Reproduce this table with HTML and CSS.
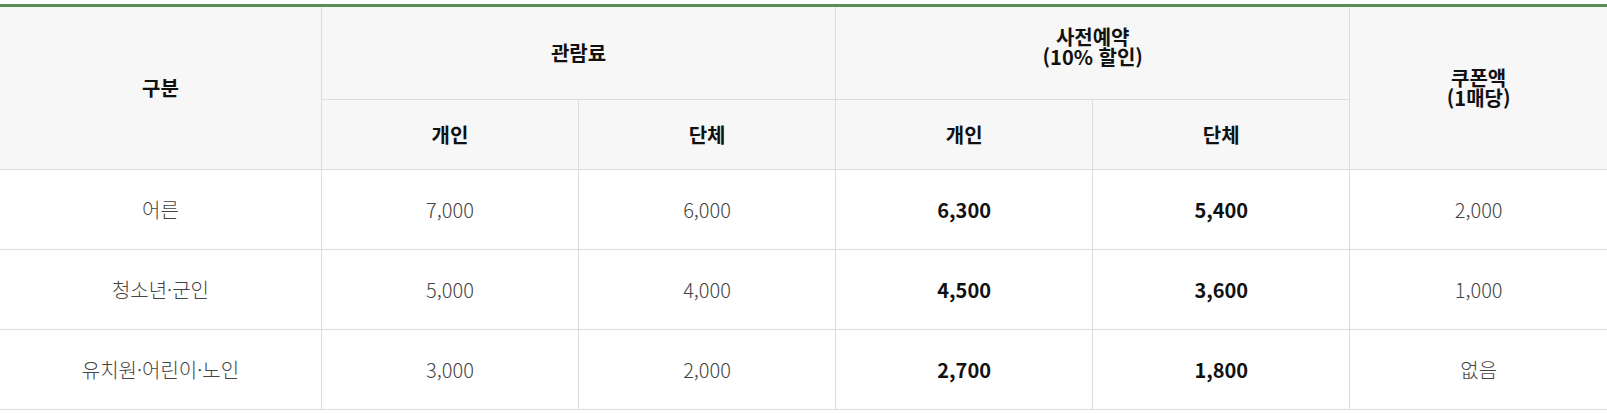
FILE: index.html
```html
<!DOCTYPE html>
<html lang="ko">
<head>
<meta charset="utf-8">
<title>관람료</title>
<link rel="stylesheet" href="styles.css">
</head>
<body>
<div class="wrap">
<table class="fee">
  <colgroup>
    <col class="c-first">
    <col class="c-rest"><col class="c-rest"><col class="c-rest"><col class="c-rest"><col class="c-rest">
  </colgroup>
  <thead>
    <tr class="h1">
      <th rowspan="2">구분</th>
      <th colspan="2">관람료</th>
      <th colspan="2" class="two up">사전예약<br>(10% 할인)</th>
      <th rowspan="2" class="two last">쿠폰액<br>(1매당)</th>
    </tr>
    <tr class="h2">
      <th>개인</th>
      <th>단체</th>
      <th>개인</th>
      <th>단체</th>
    </tr>
  </thead>
  <tbody>
    <tr>
      <td>어른</td><td>7,000</td><td>6,000</td><td class="b">6,300</td><td class="b">5,400</td><td class="last">2,000</td>
    </tr>
    <tr>
      <td>청소년·군인</td><td>5,000</td><td>4,000</td><td class="b">4,500</td><td class="b">3,600</td><td class="last">1,000</td>
    </tr>
    <tr>
      <td>유치원·어린이·노인</td><td>3,000</td><td>2,000</td><td class="b">2,700</td><td class="b">1,800</td><td class="last">없음</td>
    </tr>
  </tbody>
</table>
</div>
</body>
</html>
```
FILE: styles.css
```css
html, body {
  margin: 0;
  padding: 0;
  background: #fff;
}
.wrap {
  padding-top: 4px;
}
.fee {
  width: 100%;
  border-collapse: collapse;
  table-layout: fixed;
  border-top: 3px solid #588c58;
  font-family: "Noto Sans CJK KR", "Noto Sans", sans-serif;
  font-size: 20px;
  color: #444;
}
.c-first { width: 20%; }
.c-rest { width: 16%; }
.fee th {
  background: #f7f7f7;
  color: #111;
  font-weight: 700;
  line-height: 22px;
  border: 1px solid #dcdcdc;
  text-align: center;
  vertical-align: middle;
  padding: 0;
}
.fee th.two {
  line-height: 20px;
}
.fee td {
  border: 1px solid #dcdcdc;
  text-align: center;
  vertical-align: middle;
  font-weight: 300;
  height: 79px;
  padding: 0;
}
.fee tr > :first-child { border-left: none; }
.fee .last { border-right: none; }
.fee .h1 th { height: 92px; }
.fee .h1 th.up {
  height: 80px;
  padding-bottom: 12px;
}
.fee .h2 th { height: 69px; }
.fee td.b {
  font-weight: 700;
  color: #111;
}
```
